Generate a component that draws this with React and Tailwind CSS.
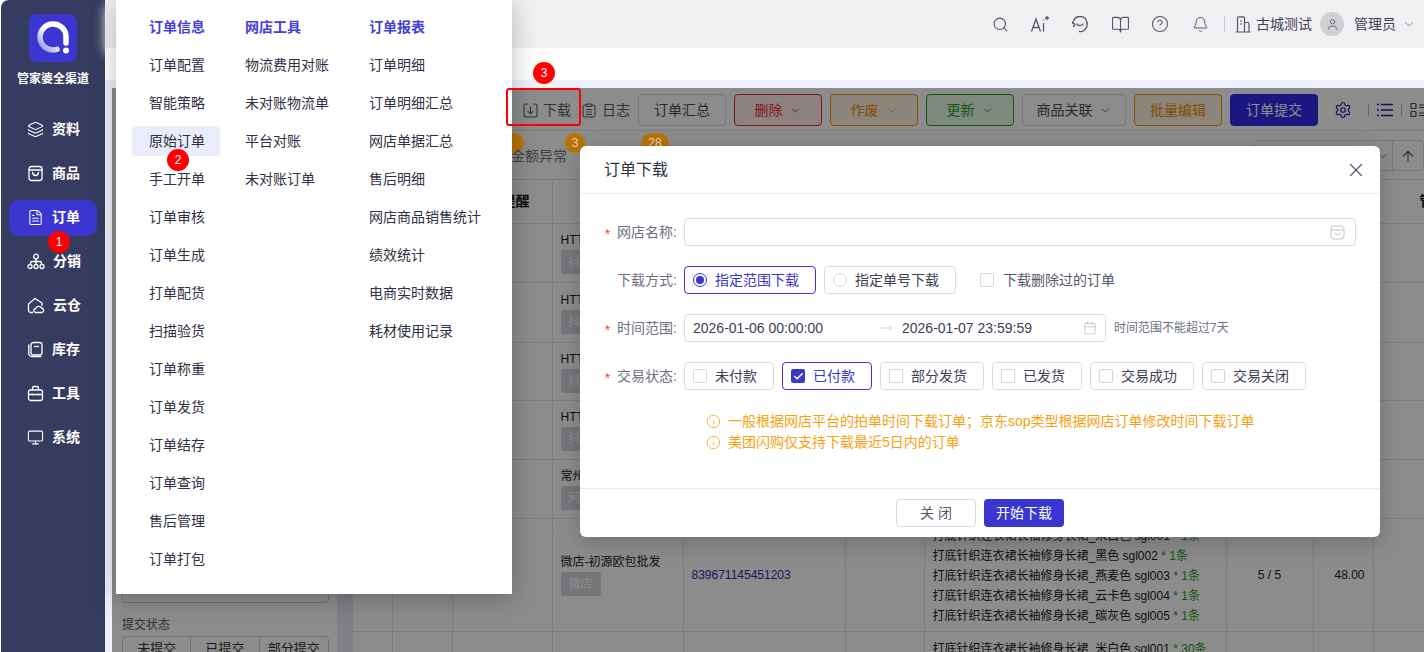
import { Search, Layers, FileText, Monitor, CircleHelp, Bell, ChevronDown, User, BookOpen, Settings, ArrowUp, X, Calendar, MoveRight, Info, Check } from "lucide-react";

const navItems = [
  { label: "资料", icon: <Layers size={17} strokeWidth={1.5} /> },
  { label: "商品", icon: <BagIcon /> },
  { label: "订单", icon: <FileText size={17} strokeWidth={1.5} />, active: true },
  { label: "分销", icon: <TreeIcon /> },
  { label: "云仓", icon: <CloudHouseIcon /> },
  { label: "库存", icon: <StockIcon /> },
  { label: "工具", icon: <ToolboxIcon /> },
  { label: "系统", icon: <Monitor size={17} strokeWidth={1.5} /> },
];

const menuCols = [
  {
    title: "订单信息",
    width: "w-[96px]",
    items: ["订单配置", "智能策略", "原始订单", "手工开单", "订单审核", "订单生成", "打单配货", "扫描验货", "订单称重", "订单发货", "订单结存", "订单查询", "售后管理", "订单打包"],
  },
  { title: "网店工具", width: "w-[124px]", items: ["物流费用对账", "未对账物流单", "平台对账", "未对账订单"] },
  { title: "订单报表", width: "w-[130px]", items: ["订单明细", "订单明细汇总", "网店单据汇总", "售后明细", "网店商品销售统计", "绩效统计", "电商实时数据", "耗材使用记录"] },
];

const rows = [
  { h: "h-[59px]", shop: "HTTP测试店", tag: "抖店" },
  { h: "h-[60px]", shop: "HTTP测试店", tag: "抖店" },
  { h: "h-[58px]", shop: "HTTP测试店", tag: "抖店" },
  { h: "h-[59px]", shop: "HTTP测试店", tag: "抖店" },
  { h: "h-[59px]", shop: "常州测试店", tag: "阿里" },
  {
    h: "h-[113px]",
    shop: "微店-初源欧包批发",
    tag: "微店",
    order: "839671145451203",
    goods: [["米白色 sgl001", "1条"], ["黑色 sgl002", "1条"], ["燕麦色 sgl003", "1条"], ["云卡色 sgl004", "1条"], ["碳灰色 sgl005", "1条"]],
    qty: "5 / 5",
    price: "48.00",
  },
  { h: "h-[113px]", shop: "", tag: "", goods: [["米白色 sgl001", "30条"]] },
];

const statusOptions = [
  { label: "未付款", w: "w-[90px]" },
  { label: "已付款", w: "w-[90px]", checked: true },
  { label: "部分发货", w: "w-[104px]" },
  { label: "已发货", w: "w-[90px]" },
  { label: "交易成功", w: "w-[104px]" },
  { label: "交易关闭", w: "w-[104px]" },
];

function BagIcon() {
  return (
    <svg width="17" height="17" viewBox="0 0 17 17" fill="none" stroke="currentColor" strokeWidth="1.3">
      <rect x="2" y="1.500" width="13" height="14" rx="2.500" />
      <path d="M2 5h13M5.500 7.500c.4 2 1.500 3 3 3s2.600-1 3-3" strokeLinecap="round" />
    </svg>
  );
}

function TreeIcon() {
  return (
    <svg width="18" height="17" viewBox="0 0 18 17" fill="none" stroke="currentColor" strokeWidth="1.3">
      <circle cx="9" cy="3.500" r="2.300" />
      <circle cx="3" cy="13.500" r="2" />
      <circle cx="9" cy="13.500" r="2" />
      <circle cx="15" cy="13.500" r="2" />
      <path d="M9 6v5.500M3.500 11.500V10c0-.8.700-1.500 1.500-1.500h8c.8 0 1.500.7 1.500 1.500v1.500" />
    </svg>
  );
}

function CloudHouseIcon() {
  return (
    <svg width="18" height="17" viewBox="0 0 18 17" fill="none" stroke="currentColor" strokeWidth="1.3" strokeLinejoin="round">
      <path d="M6 15.500H3.500a2 2 0 0 1-2-2V7L8 1.500 15 6v3" />
      <path d="M9 15.500a2 2 0 0 1-.3-4 3 3 0 0 1 5.600-.5 2.300 2.300 0 0 1 .7 4.500z" />
    </svg>
  );
}

function StockIcon() {
  return (
    <svg width="17" height="17" viewBox="0 0 17 17" fill="none" stroke="currentColor" strokeWidth="1.3">
      <rect x="4" y="1.500" width="11" height="12.500" rx="2.500" />
      <path d="M7 5.500h5" />
      <path d="M1.800 4v8.500a3 3 0 0 0 3 3H14" strokeLinecap="round" />
    </svg>
  );
}

function ToolboxIcon() {
  return (
    <svg width="17" height="17" viewBox="0 0 17 17" fill="none" stroke="currentColor" strokeWidth="1.3">
      <rect x="1.500" y="5" width="14" height="10.500" rx="2" />
      <path d="M5.500 5V3a1.500 1.500 0 0 1 1.500-1.500h3A1.500 1.500 0 0 1 11.500 3v2M1.500 9.500h14M5.500 8.500v2M11.500 8.500v2" />
    </svg>
  );
}

function Logo() {
  return (
    <div className="w-[48px] h-[48px] rounded-[8px] bg-[#3a36cf] flex items-center justify-center">
      <svg width="36" height="36" viewBox="0 0 36 36" fill="none">
        <defs>
          <linearGradient id="logoArc" x1="0" y1="1" x2="1" y2="0">
            <stop offset="0" stopColor="#8f8de6" />
            <stop offset="0.5" stopColor="#ffffff" />
          </linearGradient>
        </defs>
        <path d="M22 29.300A13 13 0 1 1 31 17.500V23" stroke="url(#logoArc)" strokeWidth="5.500" strokeLinecap="round" />
        <circle cx="31" cy="30.500" r="3" fill="#fff" />
      </svg>
    </div>
  );
}

function AiIcon() {
  return (
    <svg width="20" height="18" viewBox="0 0 20 18" fill="none" stroke="#53566b" strokeWidth="1.300">
      <path d="M1.500 16.500 6 4l4.500 12.500M3 12.500h6" />
      <path d="M13.500 8v8.500" />
      <path d="M13.500 4.500v.8M17 1v4M15 3h4" />
    </svg>
  );
}

function HeadsetIcon() {
  return (
    <svg width="18" height="18" viewBox="0 0 18 18" fill="none" stroke="#53566b" strokeWidth="1.300" strokeLinecap="round">
      <path d="M2 8.500C2 4.500 5 1.500 9 1.500s6.500 2.500 7 6" />
      <path d="M1.500 7.500 4 9.500l-1.500 2M16 7.500c.5 3-.5 6-3 8-1.500 1-3 1.200-4.500 1" />
      <path d="M6 9c.5 2 4.500 2.500 6 0" />
    </svg>
  );
}

function BuildingIcon() {
  return (
    <svg width="16" height="17" viewBox="0 0 16 17" fill="none" stroke="#53566b" strokeWidth="1.200">
      <path d="M.5 16h15M2.500 16V2A1.200 1.200 0 0 1 3.700.8h4.600A1.200 1.200 0 0 1 9.500 2v14M9.500 6.500h3.500a1 1 0 0 1 1 1V16M5 5h2M5 8h2" />
    </svg>
  );
}

function ShopIcon() {
  return (
    <svg width="15" height="15" viewBox="0 0 15 15" fill="none" stroke="#c3c4cc" strokeWidth="1">
      <rect x="1" y="1" width="13" height="13" rx="3" />
      <path d="M1 5h13M4.500 7.500c.5 1.500 1.500 2 3 2s2.500-.5 3-2" />
    </svg>
  );
}

function DownloadIcon() {
  return (
    <svg width="15" height="15" viewBox="0 0 15 15" fill="none" stroke="currentColor" strokeWidth="1.100" strokeLinecap="round">
      <path d="M4.500 1H3a2 2 0 0 0-2 2v9a2 2 0 0 0 2 2h9a2 2 0 0 0 2-2V3a2 2 0 0 0-2-2h-1.500" />
      <path d="M7.500 4v6.500M5 8.300l2.500 2.400L10 8.300" />
    </svg>
  );
}

function LogIcon() {
  return (
    <svg width="14" height="15" viewBox="0 0 14 15" fill="none" stroke="currentColor" strokeWidth="1.100">
      <path d="M4 2H2.800A1.800 1.800 0 0 0 1 3.800v8.400A1.800 1.800 0 0 0 2.800 14h8.400a1.800 1.800 0 0 0 1.800-1.800V3.800A1.800 1.800 0 0 0 11.200 2H10" />
      <rect x="4" y="1" width="6" height="2.400" rx="1" />
      <path d="M4 6.500h6M4 9h6M4 11.500h6" />
    </svg>
  );
}

function GridIcon() {
  return (
    <svg width="16" height="16" viewBox="0 0 16 16" fill="none" stroke="#4a4a55" strokeWidth="1.200" className="shrink-0">
      <rect x="1" y="1.500" width="5" height="5" rx="1" />
      <rect x="1" y="9.500" width="5" height="5" rx="1" />
      <path d="M9 3h7M9 5.500h7M9 11h7M9 13.500h7" />
    </svg>
  );
}

function ListIcon() {
  return (
    <svg width="16" height="14" viewBox="0 0 16 14" fill="none" stroke="#1f1a9e" strokeWidth="1.300" className="shrink-0">
      <path d="M4 1.500h12M4 7h12M4 12.500h12M0 1.500h2M0 7h2M0 12.500h2" />
    </svg>
  );
}

function NumberBadge({ n, className }) {
  return (
    <div className={`absolute w-[22px] h-[22px] rounded-full bg-[#ff0000] text-white text-[12px] flex items-center justify-center z-50 ${className}`}>
      {n}
    </div>
  );
}

function ToolButton({ label, tone, caret }) {
  const tones = {
    plain: "w-[88px] border-[#d9d9e0] text-[#4b4b63] bg-white",
    wide: "w-[104px] border-[#d9d9e0] text-[#4b4b63] bg-white",
    red: "w-[88px] border-[#ee2b2b] text-[#ee2b2b] bg-[#ffe9e9]",
    orange: "w-[88px] border-[#f08c00] text-[#f08c00] bg-[#fff3e0]",
    green: "w-[88px] border-[#1da31d] text-[#1da31d] bg-[#e6f7e6]",
    solid: "w-[88px] border-[#312ce9] text-white bg-[#312ce9]",
  };
  return (
    <div className={`h-[32px] shrink-0 rounded-[4px] border flex items-center justify-center gap-[6px] text-[14px] ${tones[tone]}`}>
      {label}
      {caret && <ChevronDown size={13} strokeWidth={1.5} />}
    </div>
  );
}

function Box({ checked }) {
  return checked ? (
    <span className="w-[14px] h-[14px] rounded-[2px] bg-[#3a36cf] flex items-center justify-center">
      <Check size={11} strokeWidth={3.5} className="text-white" />
    </span>
  ) : (
    <span className="w-[14px] h-[14px] rounded-[2px] border border-[#d5d6de] bg-white" />
  );
}

function FormRow({ label, required, children }) {
  return (
    <div className="flex items-center">
      <div className="w-[104px] pr-[7px] flex justify-end items-center gap-[5px] text-[14px] text-[#6e7085]">
        {required && <span className="text-[#f5403a] text-[14px] leading-[14px] translate-y-[2px]">*</span>}
        <span className="ml-[2px]">{label}:</span>
      </div>
      {children}
    </div>
  );
}

export default function App() {
  return (
    <div
      className="w-[1424px] h-[652px] overflow-hidden flex bg-white relative"
      style={{ fontFamily: '"Liberation Sans", "Noto Sans CJK SC", sans-serif' }}
    >
      {/* sidebar */}
      <aside className="w-[105px] h-full shrink-0 bg-white">
        <div className="ml-px h-full rounded-tl-[8px] bg-[#363c60] flex flex-col items-center text-white">
          <div className="mt-[14px]">
            <Logo />
          </div>
          <div className="mt-[9px] text-[12px] font-bold leading-[16px]">管家婆全渠道</div>
          <nav className="mt-[25px] w-full flex flex-col gap-[8px]">
            {navItems.map((item) => (
              <div
                key={item.label}
                className={`ml-[8px] w-[88px] h-[36px] rounded-[10px] flex items-center gap-[8px] pl-[18px] pb-[2px] text-[14px] font-bold ${item.active ? "bg-[#3a36cf]" : ""}`}
              >
                {item.icon}
                <span>{item.label}</span>
              </div>
            ))}
          </nav>
        </div>
      </aside>

      <div className="flex-1 min-w-0 flex flex-col">
        {/* top bar */}
        <header className="h-[48px] shrink-0 bg-[#f0f0f3] flex items-center justify-end text-[14px] text-[#3e4055] shadow-[0_6px_10px_rgba(240,240,243,0.9)]">
          <div className="flex items-center">
            <span className="w-[40px] flex justify-center"><Search size={17} strokeWidth={1.5} className="text-[#53566b]" /></span>
            <span className="w-[40px] flex justify-center"><AiIcon /></span>
            <span className="w-[40px] flex justify-center"><HeadsetIcon /></span>
            <span className="w-[40px] flex justify-center"><BookOpen size={19} strokeWidth={1.4} className="text-[#53566b]" /></span>
            <span className="w-[40px] flex justify-center"><CircleHelp size={18} strokeWidth={1.4} className="text-[#53566b]" /></span>
            <span className="w-[40px] flex justify-center"><Bell size={17} strokeWidth={1.4} className="text-[#53566b]" /></span>
          </div>
          <div className="ml-[4px] w-px h-[16px] bg-[#bcc3ee]" />
          <div className="ml-[10px] flex items-center gap-[5px]">
            <BuildingIcon />
            <span>古城测试</span>
          </div>
          <div className="ml-[8px] w-[24px] h-[24px] rounded-full bg-[#d0d0d3] flex items-center justify-center">
            <User size={13} strokeWidth={1.5} className="text-[#55576a]" />
          </div>
          <span className="ml-[10px]">管理员</span>
          <ChevronDown size={14} strokeWidth={1.3} className="ml-[6px] mr-[8px] text-[#6e7085]" />
        </header>
        <div className="h-[32px] shrink-0 bg-white" />
        <div className="h-[8px] shrink-0 bg-[#eef0fb]" />

        <div className="flex-1 min-h-0 flex">
          <div className="w-[7px] shrink-0 bg-[#eef0fb]" />
          {/* dimmed page */}
          <div className="flex-1 min-w-0 relative overflow-hidden bg-white flex">
            {/* filter pane */}
            <div className="w-[225px] shrink-0 pl-[10px] pr-[8px] pt-[460px]">
              <div className="h-[55px] border border-[#cfd0d8] rounded-b-[4px]" />
              <div className="mt-[13px] text-[12px] leading-[18px] text-[#55576a]">提交状态</div>
              <div className="mt-[2px] h-[40px] border border-[#cfd0d8] rounded-t-[4px] grid grid-cols-3 text-[13px] text-[#333]">
                <div className="text-center pt-[2px] border-r border-[#cfd0d8]">未提交</div>
                <div className="text-center pt-[2px] border-r border-[#cfd0d8]">已提交</div>
                <div className="text-center pt-[2px]">部分提交</div>
              </div>
            </div>
            <div className="w-[16px] shrink-0 bg-[#e8e8f0]" />

            {/* order area */}
            <div className="flex-1 min-w-0 flex flex-col text-[12px] text-[#222]">
              <div className="h-[43px] shrink-0 border-b border-[#e3e3e8] flex items-center gap-[8px] pl-[285px] pb-[4px] pt-[6px]">
                <ToolButton label="订单汇总" tone="plain" />
                <ToolButton label="删除" tone="red" caret />
                <ToolButton label="作废" tone="orange" caret />
                <ToolButton label="更新" tone="green" caret />
                <ToolButton label="商品关联" tone="wide" caret />
                <ToolButton label="批量编辑" tone="orange" />
                <ToolButton label="订单提交" tone="solid" />
                <Settings size={18} strokeWidth={1.5} className="ml-[8px] shrink-0 mr-[8px] text-[#1f1a9e]" />
                <span className="shrink-0 w-px h-[12px] bg-[#b5b5bd]" />
                <ListIcon />
                <span className="shrink-0 w-px h-[12px] bg-[#b5b5bd]" />
                <GridIcon />
              </div>
              <div className="h-[49px] shrink-0 border-b border-[#e3e3e8] relative flex justify-end pt-[9px]">
                <div className="w-[138px] h-[31px] border border-[#d9d9e0] rounded-l-[4px] flex items-center justify-end pr-[3px]">
                  <ChevronDown size={12} className="text-[#777]" />
                </div>
                <div className="w-[31px] h-[31px] border border-l-0 border-[#d9d9e0] rounded-r-[4px] flex items-center justify-center">
                  <ArrowUp size={16} strokeWidth={1.6} className="text-[#4b4b63]" />
                </div>
              </div>
              <table className="table-fixed border-collapse w-[1071px]">
                <colgroup>
                  <col className="w-[39px]" />
                  <col className="w-[60px]" />
                  <col className="w-[100px]" />
                  <col className="w-[131px]" />
                  <col className="w-[162px]" />
                  <col className="w-[79px]" />
                  <col className="w-[302px]" />
                  <col className="w-[87px]" />
                  <col className="w-[60px]" />
                  <col className="w-[51px]" />
                </colgroup>
                <thead>
                  <tr className="h-[43px] border-b border-[#e3e3e8] text-[14px] font-bold">
                    <th className="border-r border-[#e3e3e8]" />
                    <th className="border-r border-[#e3e3e8]" />
                    <th className="border-r border-[#e3e3e8] text-right pr-[22px] text-[#111] font-bold">提醒</th>
                    <th className="border-r border-[#e3e3e8]">网店名称</th>
                    <th className="border-r border-[#e3e3e8]">订单编号</th>
                    <th className="border-r border-[#e3e3e8]" />
                    <th className="border-r border-[#e3e3e8]">商品</th>
                    <th className="border-r border-[#e3e3e8]" />
                    <th className="border-r border-[#e3e3e8]" />
                    <th className="text-left pl-[46px] whitespace-nowrap overflow-hidden">管</th>
                  </tr>
                </thead>
                <tbody>
                  {rows.map((row, i) => (
                    <tr key={i} className={`${row.h} border-b border-[#e3e3e8] align-middle`}>
                      <td className="border-r border-[#e3e3e8]" />
                      <td className="border-r border-[#e3e3e8]" />
                      <td className="border-r border-[#e3e3e8]" />
                      <td className="border-r border-[#e3e3e8] pl-[8px]">
                        {row.shop && <div className="leading-[18px] whitespace-nowrap overflow-hidden">{row.shop}</div>}
                        {row.tag && (
                          <div className="mt-px w-[40px] h-[24px] rounded-[3px] bg-[#d8d8de] text-white flex items-center justify-center">
                            {row.tag}
                          </div>
                        )}
                      </td>
                      <td className="border-r border-[#e3e3e8] pl-[8px] text-[#2e2aa8]">{row.order}</td>
                      <td className="border-r border-[#e3e3e8]" />
                      <td className="border-r border-[#e3e3e8] pl-[8px] align-top pt-[7px]">
                        {row.goods?.map(([name, count]) => (
                          <div key={name} className="h-[20px] leading-[20px] whitespace-nowrap">
                            打底针织连衣裙长袖修身长裙_{name} <span className="text-[#1f9a1f]">* {count}</span>
                          </div>
                        ))}
                      </td>
                      <td className="border-r border-[#e3e3e8] text-center">{row.qty}</td>
                      <td className="border-r border-[#e3e3e8] text-right pr-[8px]">{row.price}</td>
                      <td />
                    </tr>
                  ))}
                </tbody>
              </table>
            </div>
            <div className="absolute inset-0 bg-black/45" />
          </div>
        </div>
      </div>

      {/* orange counters and tool links sit in the dimmed strip */}
      <div className="absolute left-[500px] top-[133px] w-[24px] h-[20px] rounded-full bg-[#b87407]" />
      <div className="absolute left-[565px] top-[133px] w-[20px] h-[20px] rounded-full bg-[#b87407] text-[#e3d5bb] text-[12px] flex items-center justify-center">3</div>
      <div className="absolute left-[641px] top-[133px] w-[28px] h-[20px] rounded-full bg-[#b87407] text-[#e3d5bb] text-[12px] flex items-center justify-center">28</div>
      <div className="absolute left-[511px] top-[146px] text-[14px] leading-[20px] text-[#3f3f47]">金额异常</div>
      <div className="absolute left-[523px] top-[100px] flex items-center gap-[5px] text-[14px] leading-[20px] text-[#33333c]">
        <DownloadIcon />
        下载
      </div>
      <div className="absolute left-[582px] top-[100px] flex items-center gap-[6px] text-[14px] leading-[20px] text-[#33333c]">
        <LogIcon />
        日志
      </div>
      <div className="absolute left-[506px] top-[88px] w-[75px] h-[38px] border-2 border-[#ff0000] rounded-[3px] z-40" />

      {/* mega menu */}
      <div className="absolute left-[116px] top-0 w-[396px] h-[594px] bg-white shadow-[0_4px_24px_rgba(0,0,0,0.25)] flex pl-[33px] pt-[8px] z-30">
        {menuCols.map((col) => (
          <div key={col.title} className={col.width}>
            <div className="h-[38px] leading-[38px] text-[14px] font-bold text-[#4440d8]">{col.title}</div>
            {col.items.map((item) => (
              <div
                key={item}
                className={`h-[38px] flex items-center text-[14px] text-[#2f3044] whitespace-nowrap relative ${item === "原始订单" ? "before:absolute before:-left-[17px] before:top-[4px] before:w-[88px] before:h-[30px] before:rounded-[4px] before:bg-[#ebecfb]" : ""}`}
              >
                <span className="relative">{item}</span>
              </div>
            ))}
          </div>
        ))}
      </div>

      {/* download dialog */}
      <div className="absolute left-[580px] top-[146px] w-[800px] h-[391px] bg-white rounded-[6px] shadow-[0_6px_24px_rgba(0,0,0,0.2)] flex flex-col z-40">
        <div className="h-[48px] shrink-0 border-b border-[#ebebf0] flex items-center justify-between pl-[24px] pr-[13px]">
          <span className="text-[16px] text-[#2f3044]">订单下载</span>
          <X size={22} strokeWidth={1.3} className="text-[#55576a]" />
        </div>
        <div className="flex-1 flex flex-col gap-[20px] pt-[24px]">
          <FormRow label="网店名称" required>
            <div className="w-[672px] h-[28px] border border-[#d9d9e3] rounded-[4px] flex items-center justify-end pr-[10px]">
              <ShopIcon />
            </div>
          </FormRow>
          <FormRow label="下载方式">
            <div className="flex items-center gap-[8px] text-[14px]">
              <div className="w-[132px] h-[28px] border border-[#3a36cf] rounded-[4px] flex items-center gap-[8px] pl-[8px] text-[#3a36cf]">
                <span className="w-[14px] h-[14px] rounded-full border border-[#3a36cf] flex items-center justify-center">
                  <span className="w-[8px] h-[8px] rounded-full bg-[#3a36cf]" />
                </span>
                指定范围下载
              </div>
              <div className="w-[132px] h-[28px] border border-[#d9d9e3] rounded-[4px] flex items-center gap-[8px] pl-[8px] text-[#3e4055]">
                <span className="w-[14px] h-[14px] rounded-full border border-[#d9d9e3]" />
                指定单号下载
              </div>
              <div className="ml-[16px] flex items-center gap-[9px] text-[#55576a]">
                <Box />
                下载删除过的订单
              </div>
            </div>
          </FormRow>
          <FormRow label="时间范围" required>
            <div className="w-[422px] h-[28px] border border-[#d9d9e3] rounded-[4px] flex items-center pl-[8px] pr-[8px] text-[14px] text-[#3e4055]">
              <span className="w-[186px]">2026-01-06 00:00:00</span>
              <MoveRight size={14} strokeWidth={1} className="text-[#b5b6c0]" />
              <span className="ml-[9px] flex-1">2026-01-07 23:59:59</span>
              <Calendar size={14} strokeWidth={1} className="text-[#a8a9b5]" />
            </div>
            <span className="ml-[8px] text-[12px] text-[#6e7085]">时间范围不能超过7天</span>
          </FormRow>
          <FormRow label="交易状态" required>
            <div className="flex items-center gap-[8px]">
              {statusOptions.map((opt) => (
                <div
                  key={opt.label}
                  className={`${opt.w} h-[28px] rounded-[4px] border flex items-center gap-[8px] pl-[8px] text-[14px] ${opt.checked ? "border-[#3a36cf] text-[#3a36cf]" : "border-[#d9d9e3] text-[#3e4055]"}`}
                >
                  <Box checked={opt.checked} />
                  {opt.label}
                </div>
              ))}
            </div>
          </FormRow>
          <div className="pl-[126px] mt-px text-[14px] text-[#fa9f0f] flex flex-col gap-[1px]">
            <div className="h-[20px] flex items-center gap-[7px]">
              <Info size={15} strokeWidth={1.3} />
              一般根据网店平台的拍单时间下载订单；京东sop类型根据网店订单修改时间下载订单
            </div>
            <div className="h-[20px] flex items-center gap-[7px]">
              <Info size={15} strokeWidth={1.3} />
              美团闪购仅支持下载最近5日内的订单
            </div>
          </div>
        </div>
        <div className="h-[49px] shrink-0 border-t border-[#ebebf0] flex items-center justify-center gap-[8px] text-[14px]">
          <div className="w-[80px] h-[28px] rounded-[4px] border border-[#d9d9e3] text-[#55576a] flex items-center justify-center">关 闭</div>
          <div className="w-[80px] h-[28px] rounded-[4px] bg-[#3a36cf] text-white flex items-center justify-center">开始下载</div>
        </div>
      </div>

      <NumberBadge n="1" className="left-[48px] top-[231px]" />
      <NumberBadge n="2" className="left-[167px] top-[149px]" />
      <NumberBadge n="3" className="left-[533px] top-[62px]" />
    </div>
  );
}
